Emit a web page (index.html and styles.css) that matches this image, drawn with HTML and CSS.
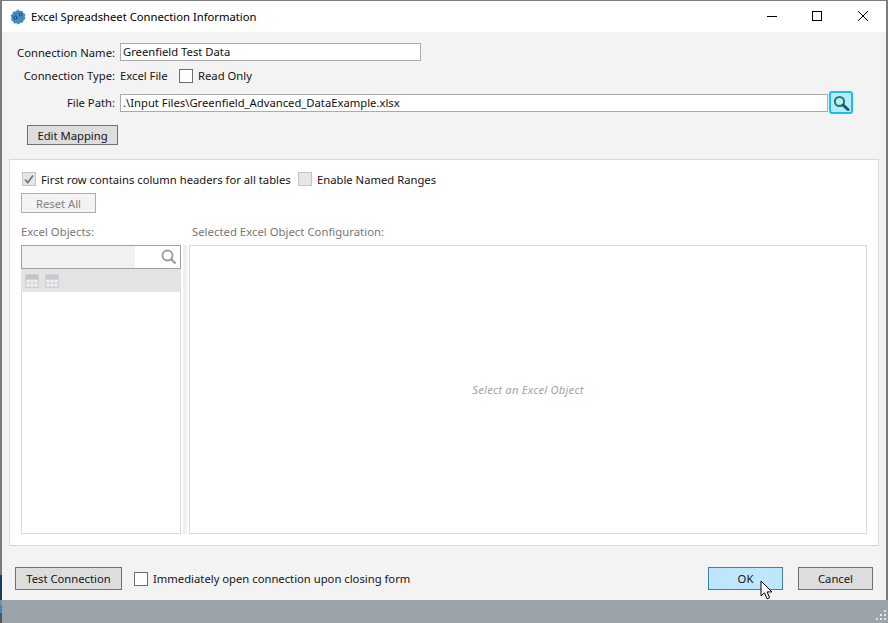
FILE: index.html
```html
<!DOCTYPE html>
<html lang="en">
<head>
<meta charset="utf-8">
<title>Excel Spreadsheet Connection Information</title>
<link rel="stylesheet" href="styles.css">
</head>
<body>
<div class="window">
  <header class="titlebar">
    <svg class="app-icon" width="16" height="16" viewBox="0 0 16 16">
      <path d="M8 .5l2 1.400 2.400-.2.900 2.200 2 1.300-.6 2.400.8 2.200-1.900 1.500-.6 2.300-2.400.2L8.500 15.500l-2-1.200-2.400.3-1-2.200L1 11l.5-2.400L.5 6.300l2-1.400.5-2.400 2.400 0z" fill="#4389c4"/>
      <circle cx="5.500" cy="8.500" r="2" fill="#1f4f7a"/>
      <circle cx="5.500" cy="8.500" r=".8" fill="#8fbfe0"/>
      <circle cx="10.500" cy="5.500" r="1.800" fill="#1f4f7a"/>
      <circle cx="10.500" cy="5.500" r=".7" fill="#8fbfe0"/>
    </svg>
    <span class="title-text">Excel Spreadsheet Connection Information</span>
    <div class="win-controls">
      <svg class="win-btn" width="45" height="31" viewBox="0 0 45 31"><path d="M18 15.500h10" stroke="#000" fill="none"/></svg>
      <svg class="win-btn" width="46" height="31" viewBox="0 0 46 31"><rect x="18.500" y="10.500" width="9" height="9" stroke="#000" fill="none"/></svg>
      <svg class="win-btn" width="46" height="31" viewBox="0 0 46 31"><path d="M18 10l10 10M28 10L18 20" stroke="#000" fill="none"/></svg>
    </div>
  </header>

  <main class="content">
    <div class="form-row row-name">
      <label class="row-label">Connection Name:</label>
      <div class="textbox box-name">Greenfield Test Data</div>
    </div>
    <div class="form-row row-type">
      <label class="row-label">Connection Type:</label>
      <span class="type-value">Excel File</span>
      <span class="check check-readonly"></span>
      <span>Read Only</span>
    </div>
    <div class="form-row row-path">
      <label class="row-label">File Path:</label>
      <div class="textbox box-path">.\Input Files\Greenfield_Advanced_DataExample.xlsx</div>
      <button class="browse-btn">
        <svg width="18" height="18" viewBox="0 0 18 18">
          <circle cx="7.500" cy="7.500" r="4.600" fill="#c8ecec" stroke="#118172" stroke-width="2"/>
          <path d="M11 11l5 4.500" stroke="#0e5f58" stroke-width="3" stroke-linecap="round"/>
        </svg>
      </button>
    </div>
    <button class="btn btn-edit">Edit Mapping</button>

    <section class="panel">
      <div class="check-row">
        <span class="check check-disabled">
          <svg width="12" height="12" viewBox="0 0 12 12"><path d="M2 6.500l2.800 3L10 2.500" stroke="#777" stroke-width="1.800" fill="none"/></svg>
        </span>
        <span class="first-row-text">First row contains column headers for all tables</span>
        <span class="check check-disabled check-named"></span>
        <span>Enable Named Ranges</span>
      </div>
      <button class="btn btn-reset">Reset All</button>
      <div class="columns">
        <div class="col-left">
          <div class="col-label">Excel Objects:</div>
          <div class="object-list">
            <div class="search-box">
              <div class="search-input"></div>
              <div class="search-end">
                <svg width="16" height="16" viewBox="0 0 16 16">
                  <circle cx="6.500" cy="6.500" r="5" fill="none" stroke="#9a9a9a" stroke-width="1.800"/>
                  <path d="M10.500 10.500l4 4" stroke="#9a9a9a" stroke-width="2.200"/>
                </svg>
              </div>
            </div>
            <div class="list-toolbar">
              <svg width="14" height="14" viewBox="0 0 14 14">
                <rect width="14" height="14" fill="#d0d0d0"/>
                <rect x="1" y="1" width="12" height="3.500" fill="#b9c8bf"/>
                <path d="M1.500 6h3v2.500h-3zM5.500 6h3v2.500h-3zM9.500 6h3v2.500h-3zM1.500 9.500h3V12.500h-3zM5.500 9.500h3V12.500h-3zM9.500 9.500h3V12.500h-3z" fill="#f2f2f2"/>
              </svg>
              <svg width="14" height="14" viewBox="0 0 14 14">
                <rect width="14" height="14" fill="#d0d0d0"/>
                <rect x="1" y="1" width="12" height="3.500" fill="#d5bfe0"/>
                <path d="M1.500 6h3v2.500h-3zM5.500 6h3v2.500h-3zM9.500 6h3v2.500h-3zM1.500 9.500h3V12.500h-3zM5.500 9.500h3V12.500h-3zM9.500 9.500h3V12.500h-3z" fill="#f2f2f2"/>
              </svg>
            </div>
            <div class="list-body"></div>
          </div>
        </div>
        <div class="splitter"></div>
        <div class="col-right">
          <div class="col-label col-label-right">Selected Excel Object Configuration:</div>
          <div class="config-pane">Select an Excel Object</div>
        </div>
      </div>
    </section>

    <footer class="actions">
      <button class="btn btn-test">Test Connection</button>
      <span class="check check-open"></span>
      <span class="open-text">Immediately open connection upon closing form</span>
      <button class="btn btn-ok">OK</button>
      <button class="btn btn-cancel">Cancel</button>
    </footer>
  </main>

  <div class="statusbar">
    <svg class="grip" width="12" height="12" viewBox="0 0 12 12" fill="#e4e6e8">
      <rect x="9" y="0" width="2" height="2"/>
      <rect x="5" y="4" width="2" height="2"/><rect x="9" y="4" width="2" height="2"/>
      <rect x="1" y="8" width="2" height="2"/><rect x="5" y="8" width="2" height="2"/><rect x="9" y="8" width="2" height="2"/>
    </svg>
  </div>

  <div class="desktop-edge"></div>

  <svg class="cursor" width="14" height="21" viewBox="0 0 14 21">
    <path d="M1 1v15l3.500-3.200 2.500 6 2.600-1.100-2.500-5.800H12z" fill="#fff" stroke="#000" stroke-width="1"/>
  </svg>
</div>
</body>
</html>
```
FILE: styles.css
```css
* { box-sizing: border-box; }
html, body { margin: 0; padding: 0; }
body {
  width: 888px;
  height: 623px;
  overflow: hidden;
  font-family: "Noto Sans", "Open Sans", sans-serif;
  font-size: 11.25px;
  color: #141414;
  background: #9ca3ab;
}
.window {
  position: relative;
  width: 888px;
  height: 623px;
  display: flex;
  flex-direction: column;
  border: 2px solid #7b7b7b;
  border-bottom: 0;
  border-top-width: 1px;
  background: #f3f3f3;
}
.titlebar {
  height: 31px;
  flex: none;
  display: flex;
  align-items: center;
  background: #fff;
  padding-left: 8px;
  color: #000;
}
.app-icon { margin-right: 5px; }
.win-controls { margin-left: auto; display: flex; }
.win-btn { display: block; }
.content {
  flex: 1;
  display: flex;
  flex-direction: column;
  padding: 0 7px;
  min-height: 0;
}
.form-row { display: flex; align-items: center; flex: none; }
.row-label { width: 106px; text-align: right; flex: none; margin-right: 5px; }
.row-name { margin-top: 11px; height: 18px; }
.row-type { margin-top: 6px; height: 17px; }
.row-path { margin-top: 7px; height: 23px; }
.textbox {
  height: 18px;
  background: #fff;
  border: 1px solid #ababab;
  padding-left: 2px;
  line-height: 16px;
  color: #111;
}
.box-name { width: 301px; }
.box-path { width: 708px; }
.type-value { width: 59px; }
.check {
  width: 14px;
  height: 14px;
  flex: none;
  display: inline-flex;
  align-items: center;
  justify-content: center;
  background: #fff;
  border: 1px solid #6f6f6f;
}
.check-disabled { background: #e6e6e6; border-color: #c4c4c4; }
.check-readonly { margin-right: 5px; }
.browse-btn {
  width: 24px;
  height: 23px;
  padding: 0;
  margin-left: 1px;
  background: #bee6fd;
  border: 2px solid #18c0e8;
  border-radius: 3px;
  display: flex;
  align-items: center;
  justify-content: center;
}
.btn {
  font: inherit;
  background: #dddddd;
  border: 1px solid #707070;
  padding: 0;
  color: #141414;
  flex: none;
}
.btn-edit { width: 91px; height: 20px; margin: 11px 0 0 18px; align-self: flex-start; }
.panel {
  flex: none;
  margin-top: 14px;
  width: 870px;
  height: 387px;
  background: #fff;
  border: 1px solid #d9d9d9;
  padding: 12px 11px 11px 11px;
  display: flex;
  flex-direction: column;
}
.check-row { display: flex; align-items: center; height: 14px; padding-left: 1px; flex: none; }
.check-row .check { margin-right: 5px; }
.first-row-text { width: 257px; white-space: nowrap; }
.btn-reset {
  width: 75px;
  height: 20px;
  margin-top: 7px;
  background: #f3f3f3;
  border-color: #adadad;
  color: #808080;
  align-self: flex-start;
}
.columns { display: flex; flex: 1; margin-top: 10px; min-height: 0; }
.col-left { width: 160px; display: flex; flex-direction: column; flex: none; }
.col-right { flex: 1; display: flex; flex-direction: column; min-width: 0; }
.col-label { height: 22px; color: #767676; line-height: 18px; letter-spacing: .05px; }
.col-label-right { padding-left: 3px; }
.splitter { width: 4px; margin: 22px 2px 0 2px; background: #f0f0f0; flex: none; }
.object-list { flex: 1; display: flex; flex-direction: column; min-height: 0; }
.search-box {
  height: 24px;
  display: flex;
  flex: none;
  border: 1px solid #a0a0a0;
}
.search-input { width: 113px; background: #f1f1f1; }
.search-end {
  flex: 1;
  background: #fff;
  display: flex;
  align-items: center;
  justify-content: flex-end;
  padding-right: 3px;
}
.list-toolbar {
  height: 23px;
  flex: none;
  background: #e3e3e3;
  display: flex;
  align-items: center;
  gap: 6px;
  padding-left: 4px;
}
.list-body {
  flex: 1;
  background: #fff;
  border: 1px solid #d9d9d9;
  border-top: 0;
}
.config-pane {
  flex: 1;
  background: #fff;
  border: 1px solid #d9d9d9;
  display: flex;
  align-items: center;
  justify-content: center;
  font-style: italic;
  color: #a3a3a3;
  letter-spacing: .2px;
}
.actions {
  display: flex;
  align-items: center;
  margin-top: 21px;
  height: 23px;
  padding-left: 6px;
  flex: none;
}
.actions .btn { height: 23px; }
.btn-test { width: 107px; }
.check-open { margin-left: 12px; margin-right: 5px; }
.btn-ok {
  width: 75px;
  margin-left: auto;
  background: #bee6fd;
  border-color: #3c7fb1;
}
.btn-cancel { width: 75px; margin-left: 15px; margin-right: 6px; }
.statusbar {
  height: 23px;
  flex: none;
  margin: 10px -2px 0;
  background: #9ca3ab;
  position: relative;
}
.grip { position: absolute; right: 1px; bottom: 1px; }
.desktop-edge {
  position: absolute;
  left: -2px;
  top: 574px;
  width: 2px;
  height: 48px;
  background: linear-gradient(#123e66 0 25px, #8a9097 25px 30px, #3f86c4 30px 38px, #50555c 38px);
}
.cursor { position: absolute; left: 758px; top: 579px; }
```
